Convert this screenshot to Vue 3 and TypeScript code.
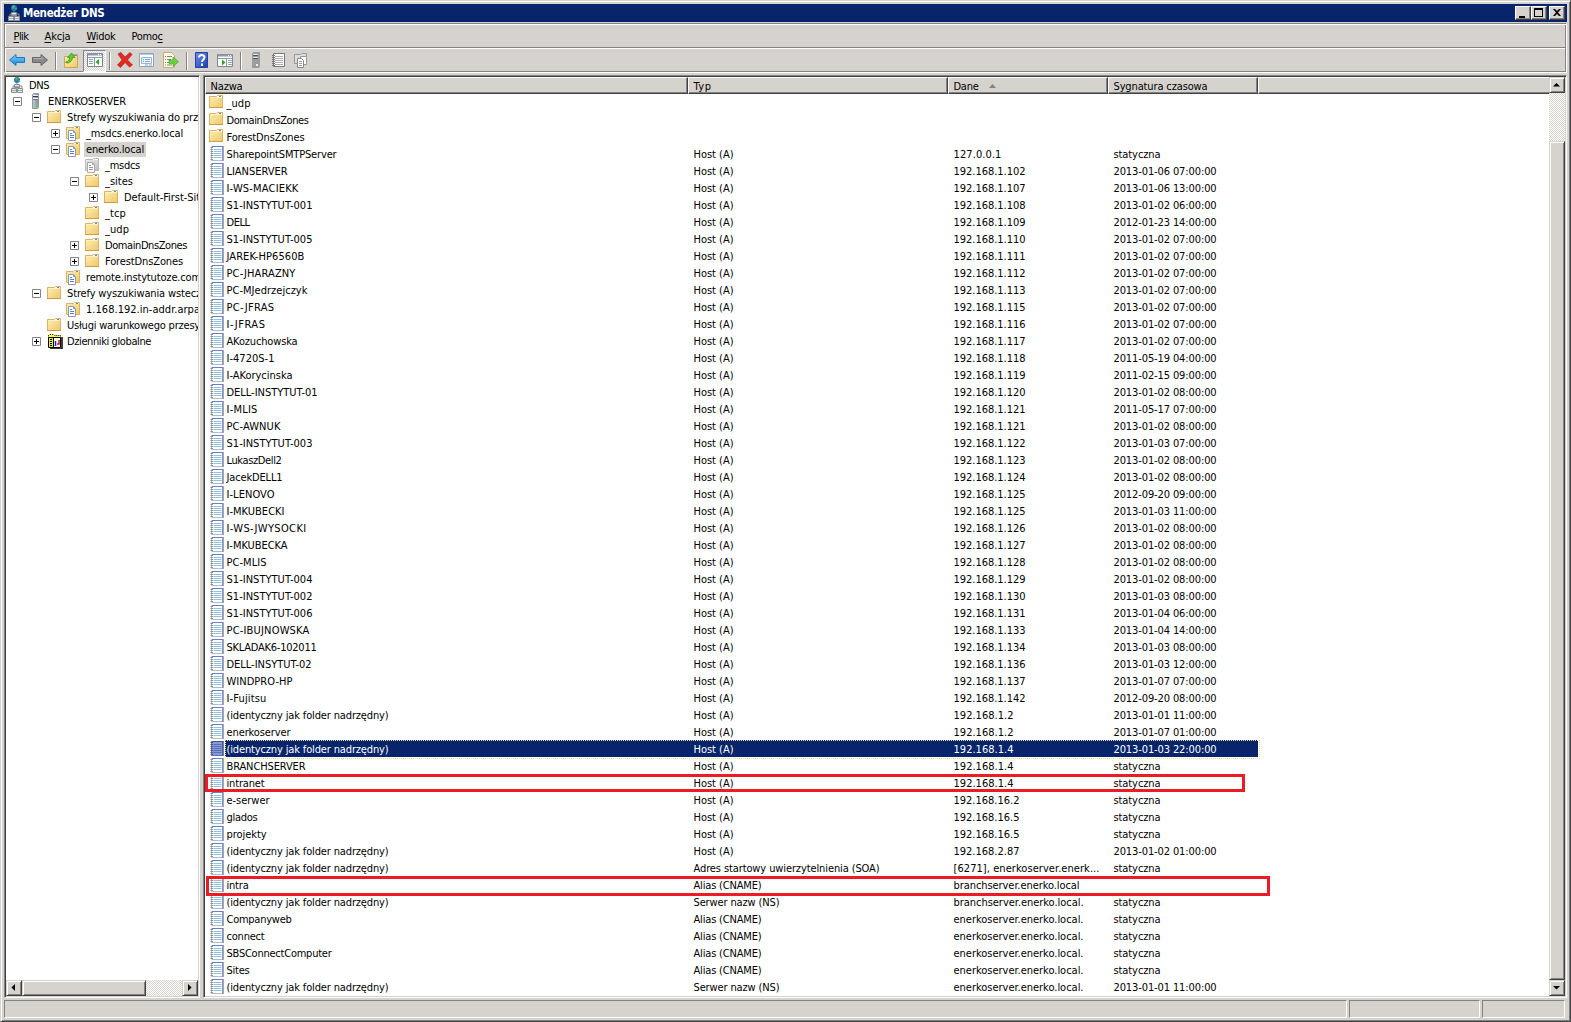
<script setup lang="ts">
type Kind = 'dns' | 'server' | 'folder' | 'zone' | 'grey' | 'log' | 'record'
interface Node { t: string; l: number; k: Kind; e?: '+' | '-'; sel?: boolean }
const tree: Node[] = [
  { t: 'DNS', l: 0, k: 'dns' },
  { t: 'ENERKOSERVER', l: 1, k: 'server', e: '-' },
  { t: 'Strefy wyszukiwania do prz', l: 2, k: 'folder', e: '-' },
  { t: '_msdcs.enerko.local', l: 3, k: 'zone', e: '+' },
  { t: 'enerko.local', l: 3, k: 'zone', e: '-', sel: true },
  { t: '_msdcs', l: 4, k: 'grey' },
  { t: '_sites', l: 4, k: 'folder', e: '-' },
  { t: 'Default-First-Sit', l: 5, k: 'folder', e: '+' },
  { t: '_tcp', l: 4, k: 'folder' },
  { t: '_udp', l: 4, k: 'folder' },
  { t: 'DomainDnsZones', l: 4, k: 'folder', e: '+' },
  { t: 'ForestDnsZones', l: 4, k: 'folder', e: '+' },
  { t: 'remote.instytutoze.com', l: 3, k: 'zone' },
  { t: 'Strefy wyszukiwania wstecz', l: 2, k: 'folder', e: '-' },
  { t: '1.168.192.in-addr.arpa', l: 3, k: 'zone' },
  { t: 'Usługi warunkowego przesy', l: 2, k: 'folder' },
  { t: 'Dzienniki globalne', l: 2, k: 'log', e: '+' },
]
const same = '(identyczny jak folder nadrzędny)'
const A = 'Host (A)'
const st = 'statyczna'
const C = 'Alias (CNAME)'
const hosts: [string, string, string][] = [
  ['LIANSERVER', '102', '2013-01-06 07'], ['I-WS-MACIEKK', '107', '2013-01-06 13'],
  ['S1-INSTYTUT-001', '108', '2013-01-02 06'], ['DELL', '109', '2012-01-23 14'],
  ['S1-INSTYTUT-005', '110', '2013-01-02 07'], ['JAREK-HP6560B', '111', '2013-01-02 07'],
  ['PC-JHARAZNY', '112', '2013-01-02 07'], ['PC-MJedrzejczyk', '113', '2013-01-02 07'],
  ['PC-JFRAS', '115', '2013-01-02 07'], ['I-JFRAS', '116', '2013-01-02 07'],
  ['AKozuchowska', '117', '2013-01-02 07'], ['I-4720S-1', '118', '2011-05-19 04'],
  ['I-AKorycinska', '119', '2011-02-15 09'], ['DELL-INSTYTUT-01', '120', '2013-01-02 08'],
  ['I-MLIS', '121', '2011-05-17 07'], ['PC-AWNUK', '121', '2013-01-02 08'],
  ['S1-INSTYTUT-003', '122', '2013-01-03 07'], ['LukaszDell2', '123', '2013-01-02 08'],
  ['JacekDELL1', '124', '2013-01-02 08'], ['I-LENOVO', '125', '2012-09-20 09'],
  ['I-MKUBECKI', '125', '2013-01-03 11'], ['I-WS-JWYSOCKI', '126', '2013-01-02 08'],
  ['I-MKUBECKA', '127', '2013-01-02 08'], ['PC-MLIS', '128', '2013-01-02 08'],
  ['S1-INSTYTUT-004', '129', '2013-01-02 08'], ['S1-INSTYTUT-002', '130', '2013-01-03 08'],
  ['S1-INSTYTUT-006', '131', '2013-01-04 06'], ['PC-IBUJNOWSKA', '133', '2013-01-04 14'],
  ['SKLADAK6-102011', '134', '2013-01-03 08'], ['DELL-INSYTUT-02', '136', '2013-01-03 12'],
  ['WINDPRO-HP', '137', '2013-01-07 07'], ['I-Fujitsu', '142', '2012-09-20 08'],
  [same, '2', '2013-01-01 11'], ['enerkoserver', '2', '2013-01-07 01'], [same, '4', '2013-01-03 22'],
]
const rows: string[][] = [
  ['_udp', '', '', ''], ['DomainDnsZones', '', '', ''], ['ForestDnsZones', '', '', ''],
  ['SharepointSMTPServer', A, '127.0.0.1', st],
  ...hosts.map(([n, ip, d]) => [n, A, '192.168.1.' + ip, d + ':00:00']),
  ['BRANCHSERVER', A, '192.168.1.4', st], ['intranet', A, '192.168.1.4', st],
  ['e-serwer', A, '192.168.16.2', st], ['glados', A, '192.168.16.5', st], ['projekty', A, '192.168.16.5', st],
  [same, A, '192.168.2.87', '2013-01-02 01:00:00'],
  [same, 'Adres startowy uwierzytelnienia (SOA)', '[6271], enerkoserver.enerk...', st],
  ['intra', C, 'branchserver.enerko.local', ''],
  [same, 'Serwer nazw (NS)', 'branchserver.enerko.local.', st],
  ['Companyweb', C, 'enerkoserver.enerko.local.', st], ['connect', C, 'enerkoserver.enerko.local.', st],
  ['SBSConnectComputer', C, 'enerkoserver.enerko.local.', st], ['Sites', C, 'enerkoserver.enerko.local.', st],
  [same, 'Serwer nazw (NS)', 'enerkoserver.enerko.local.', '2013-01-01 11:00:00'],
]
const selected = 38
const menu = [['', 'P', 'lik'], ['', 'A', 'kcja'], ['', 'W', 'idok'], ['Pomo', 'c', '']]
const tools = ['back', 'fwd', '|', 'up', 'pane', '|', 'del', 'props', 'export', '|', 'help', 'action', '|', 'srv', 'book', 'copy']

// Character advances of the classic 11px dialog font; tracking is derived so each string keeps its width.
const groups: Record<number, string> = {
  2: 'ilł', 3: 'j ', 4: 'frtI.,:-()[]', 5: 'ckszJL', 7: 'ACDGHNRU', 8: 'mwMOQ', 10: 'W',
}
const advance = (c: string): number => {
  for (const w in groups) if (groups[w].includes(c)) return Number(w)
  return 6
}
const ctx = document.createElement('canvas').getContext('2d')!
ctx.font = '11px "DejaVu Sans Condensed", "DejaVu Sans", sans-serif'
const fit = (t: string) => {
  if (!t) return {}
  const target = [...t].reduce((s, c) => s + advance(c), 0)
  return { letterSpacing: ((target - ctx.measureText(t).width) / t.length).toFixed(3) + 'px' }
}
</script>

<template>
  <svg width="0" height="0" class="defs">
    <defs>
      <linearGradient id="gf" x1="0" y1="0" x2="1" y2="1"><stop offset="0" stop-color="#fff0b8" /><stop offset="1" stop-color="#f0c766" /></linearGradient>
      <linearGradient id="gg" x1="0" y1="0" x2="1" y2="1"><stop offset="0" stop-color="#f0f0f0" /><stop offset="1" stop-color="#bdbdbd" /></linearGradient>
      <linearGradient id="gb" x1="0" y1="0" x2="0" y2="1"><stop offset="0" stop-color="#7fd4fb" /><stop offset="1" stop-color="#1184d8" /></linearGradient>
      <linearGradient id="gs" x1="0" y1="0" x2="1" y2="0"><stop offset="0" stop-color="#c3ccd4" /><stop offset="1" stop-color="#7f8c97" /></linearGradient>
      <linearGradient id="gh" x1="0" y1="0" x2="1" y2="1"><stop offset="0" stop-color="#6d8df0" /><stop offset="1" stop-color="#1c3fae" /></linearGradient>
    </defs>
    <symbol id="i-folder" viewBox="0 0 16 16">
      <path d="M.5 2.500h7l1-1h5v12H.5z" fill="url(#gf)" stroke="#dcb264" />
      <path d="M8 2.500h5" stroke="#fff" /><path d="M10 2.500h2" stroke="#3d92dc" /><path d="M1 3.500h12" stroke="#fff2c0" />
      <path d="M0 13.500h14" stroke="#c99c48" />
    </symbol>
    <symbol id="i-zone" viewBox="0 0 16 16">
      <path d="M.5 2.500h7l1-1h5v12H.5z" fill="url(#gf)" stroke="#dcb264" />
      <path d="M8 2.500h5" stroke="#fff" /><path d="M10 2.500h2" stroke="#3d92dc" />
      <path d="M2.500 5.500h5l2 2v8h-7z" fill="#fff" stroke="#8c9cb4" /><path d="M7.500 5.500v2h2" fill="none" stroke="#8c9cb4" />
      <path d="M4 8.500h2M4 10.500h4M4 12.500h4" stroke="#4a86c8" />
    </symbol>
    <symbol id="i-grey" viewBox="0 0 16 16">
      <path d="M.5 2.500h7l1-1h5v12H.5z" fill="url(#gg)" stroke="#b8b8b8" />
      <path d="M8 2.500h5" stroke="#fff" />
      <path d="M2.500 5.500h5l2 2v8h-7z" fill="#fff" stroke="#a8a8a8" /><path d="M7.500 5.500v2h2" fill="none" stroke="#a8a8a8" />
      <path d="M4 8.500h2M4 10.500h4M4 12.500h4" stroke="#999" />
    </symbol>
    <symbol id="i-record" viewBox="0 0 16 16">
      <path d="M2.500 1.500h11v14h-11z" fill="#fff" stroke="#b4bac2" />
      <path d="M3 1.500h11" stroke="#6480c0" /><path d="M14 1v15" stroke="#7888bc" stroke-width="1.500" />
      <path d="M4.500 4.500h8M4.500 6.500h8M4.500 8.500h8M4.500 10.500h8M4.500 12.500h8" stroke="#90c0dc" />
      <path d="M1.500 2.500h2.500M1.500 4.500h2.500M1.500 6.500h2.500M1.500 8.500h2.500M1.500 10.500h2.500M1.500 12.500h2.500M1.500 14.500h2.500" stroke="#909090" />
    </symbol>
    <symbol id="i-server" viewBox="0 0 16 16">
      <path d="M4.500 2l1-1.500h5v13.500l-1 1.500h-5z" fill="url(#gs)" stroke="#8f9aa3" />
      <path d="M5 3.500h5" stroke="#2f3b47" /><path d="M5 2.500h5M5 5.500h5" stroke="#eef" /><path d="M5 6.500h5" stroke="#707c88" /><path d="M8 12.500h2.500v2H8z" fill="#5fe01c" />
    </symbol>
    <symbol id="i-dns" viewBox="0 0 16 16">
      <circle cx="8" cy="3" r="3" fill="#2577c0" /><path d="M6 1l2-1 1 2-2 2zM9 3l2 0-1 2z" fill="#46c24c" />
      <path d="M8 6v2M4 11v-2h9v2" stroke="#888" fill="none" />
      <path d="M5.500 7.500h5v3h-5zM2.500 11.500h5v4h-5zM8.500 11.500h5v4h-5z" fill="#e8eaec" stroke="#858c92" />
      <path d="M6 9.500h4M3 13.500h4M9 13.500h4" stroke="#a0a8ae" />
    </symbol>
    <symbol id="i-log" viewBox="0 0 16 16">
      <path d="M1.500 2.500l1-1h4l1 1h6v2h-12z" fill="#ffff30" stroke="#000" stroke-dasharray="1 1" />
      <path d="M1.500 4.500h12v10h-12z" fill="#fff" stroke="#000" /><path d="M2 5h4v9H2z" fill="#e4e430" />
      <path d="M4 6v8" stroke="#000" stroke-width="2" stroke-dasharray="1 1" /><path d="M15 4v12H3" stroke="#000" stroke-width="1.500" fill="none" />
      <path d="M6.500 5v9" stroke="#000" /><path d="M8.500 8v5" stroke="#22b" stroke-width="1.500" /><path d="M10 11h2V7" stroke="#d11" stroke-width="1.500" fill="none" />
    </symbol>
    <symbol id="t-back" viewBox="0 0 16 16"><path d="M.5 8L7 2.500V5.500h8.500v5H7v3z" fill="url(#gb)" stroke="#1e78c0" /></symbol>
    <symbol id="t-fwd" viewBox="0 0 16 16"><path d="M15.500 8L9 2.500V5.500H.5v5H9v3z" fill="#8c8c8c" stroke="#666" /><path d="M1.500 6.500H10V5" stroke="#b5b5b5" fill="none" /></symbol>
    <symbol id="t-up" viewBox="0 0 16 16">
      <path d="M1.500 4.500h7l1-2h5v13h-13z" fill="url(#gf)" stroke="#d0a552" /><path d="M10 3.500h4" stroke="#4c9be0" />
      <path d="M2.500 10c3-.5 4-2 4-4.500H4.500L8.500 1l3.500 4.500H9.500c0 3-2.500 5.500-6 5.500z" fill="#5ad02c" stroke="#30901a" stroke-width=".7" />
    </symbol>
    <symbol id="t-pane" viewBox="0 0 16 16">
      <path d="M.5 1.500h15v13H.5z" fill="#fff" stroke="#7c8794" /><path d="M1 2.500h14" stroke="#8d99a8" stroke-width="2" /><path d="M1 5.500h14M7.500 6v8" stroke="#8c98a4" />
      <path d="M2 7.500h4M2 9.500h4M2 11.500h4" stroke="#8aa" /><path d="M12 7v6L8.500 10z" fill="#29a329" /><path d="M11 2.500h1M13 2.500h1" stroke="#fff" />
    </symbol>
    <symbol id="t-action" viewBox="0 0 16 16">
      <path d="M.5 2.500h15v12H.5z" fill="#fff" stroke="#7c8794" /><path d="M1 3.500h14" stroke="#8d99a8" stroke-width="2" /><path d="M1 6.500h14M9.500 7v7" stroke="#8c98a4" />
      <path d="M11 8.500h4M11 10.500h4M11 12.500h4" stroke="#8aa" /><path d="M5 7.500v6L8.500 10.500z" fill="#29a329" /><path d="M11 3.500h1M13 3.500h1" stroke="#fff" />
    </symbol>
    <symbol id="t-del" viewBox="0 0 16 16"><path d="M1 2l3-1.500 4 4.500 5-4.500 2 2-4.500 5.500 5 5-3 2-4.500-4.500L3.500 15.500.5 13l4.500-5z" fill="#e02a22" stroke="#a61512" stroke-width=".6" /></symbol>
    <symbol id="t-props" viewBox="0 0 16 16">
      <path d="M.5 1.500h14v13H.5z" fill="#fff" stroke="#8ea3c2" /><path d="M1 2.500h13" stroke="#b8cbe2" /><path d="M2.500 5.500h10v6h-10z" fill="#eef6ff" stroke="#9bb4cc" />
      <path d="M4 7.500h1M4 9.500h1" stroke="#3bc" /><path d="M6 7.500h5M6 9.500h5M6 13h3M10 13h3" stroke="#7aa6d8" />
    </symbol>
    <symbol id="t-export" viewBox="0 0 16 16">
      <path d="M.5.500h8l3 3v12H.5z" fill="#fffbe0" stroke="#c9b070" /><path d="M2 4.500h1M2 7.500h1M2 10.500h1M2 13h1M4 4.500h5M4 7.500h4M4 10.500h3M4 13h5" stroke="#77809a" />
      <path d="M6 8h4V5l5.500 4.700-5.500 4.800v-3H6z" fill="#6ad23c" stroke="#399a1c" stroke-width=".6" />
    </symbol>
    <symbol id="t-help" viewBox="0 0 16 16"><path d="M1.500.500h12v15h-12z" fill="url(#gh)" stroke="#2440a0" /><path d="M5 5.500C5 2 10.500 2 10.500 5.500c0 2-2.500 2-2.500 4.500M8 11.500V14" fill="none" stroke="#fff" stroke-width="2" /></symbol>
    <symbol id="t-srv" viewBox="0 0 16 16"><path d="M4 2l1-2h7v14l-1 2H4z" fill="#9c9c9c" /><path d="M5 2.500h5M5 5.500h5" stroke="#e4e4e4" /><path d="M5 3.500h5M5 6.500h5" stroke="#555" /><path d="M8 12h2v2H8z" fill="#eee" /></symbol>
    <symbol id="t-book" viewBox="0 0 16 16"><path d="M2.500 1.500h11v13h-11z" fill="#fff" stroke="#777" /><path d="M4 4.500h8M4 6.500h8M4 8.500h8M4 10.500h8M4 12.500h8" stroke="#aaa" /><path d="M1 3.500h3M1 5.500h3M1 7.500h3M1 9.500h3M1 11.500h3M1 13.500h3" stroke="#777" /></symbol>
    <symbol id="t-copy" viewBox="0 0 16 16"><path d="M1.500 2.500h6l1-1h5v10h-12z" fill="#ddd" stroke="#999" /><path d="M7.500 4.500h6v8h-6z" fill="#fff" stroke="#999" /><path d="M4.500 6.500h4l2 2v7h-6z" fill="#fff" stroke="#888" /><path d="M6 9.500h3M6 11.500h3M6 13.500h3" stroke="#999" /></symbol>
  </svg>

  <div class="win">
    <header class="title">
      <svg class="ic"><use href="#i-dns" /></svg><b>Menedżer DNS</b>
      <div class="btns">
        <i><svg viewBox="0 0 14 12"><path d="M3 9h6v2H3z" /></svg></i>
        <i><svg viewBox="0 0 14 12"><path d="M2 1h9v9H2zM3 3v6h7V3z" fill-rule="evenodd" /></svg></i>
        <i class="x"><svg viewBox="0 0 14 12"><path d="M3 2h2l2 2 2-2h2L8 5.500 11 9H9L7 7 5 9H3l3-3.500z" /></svg></i>
      </div>
    </header>
    <div class="bars">
      <nav class="menu"><span v-for="(m, i) in menu" :key="i" :style="fit(m.join(''))">{{ m[0] }}<u>{{ m[1] }}</u>{{ m[2] }}</span></nav>
      <div class="tools">
        <template v-for="(t, i) in tools" :key="i">
          <i v-if="t === '|'" class="sep" />
          <span v-else :class="['tb', t]"><svg class="ic"><use :href="'#t-' + t" /></svg></span>
        </template>
      </div>
    </div>
    <main class="body">
      <aside class="panel left">
        <div class="tree">
          <div v-for="(n, i) in tree" :key="i" :class="['node', 'l' + n.l]">
            <span v-if="n.l" class="ex"><svg v-if="n.e" width="9" height="9"><path d="M.5.5h8v8h-8z" fill="#fff" stroke="#848284" /><path :d="n.e === '+' ? 'M2 4.500h5M4.500 2v5' : 'M2 4.500h5'" stroke="#000" /></svg></span>
            <svg class="ic"><use :href="'#i-' + n.k" /></svg>
            <span :class="['lbl', { on: n.sel }]" :style="fit(n.t)">{{ n.t }}</span>
          </div>
        </div>
        <div class="hs"><i class="sb"><svg viewBox="0 0 7 7"><path d="M5 0v7L1.500 3.500z" /></svg></i><i class="sb thumb" /><span /><i class="sb"><svg viewBox="0 0 7 7"><path d="M2 0v7l3.500-3.500z" /></svg></i></div>
      </aside>
      <section class="panel right">
        <div class="list">
          <div class="cols head"><span :style="fit('Nazwa')">Nazwa</span><span :style="fit('Typ')">Typ</span><span :style="fit('Dane')">Dane<svg width="7" height="4"><path d="M3.500 0L7 4H0z" fill="#848284" /></svg></span><span :style="fit('Sygnatura czasowa')">Sygnatura czasowa</span><span /></div>
          <div v-for="(r, i) in rows" :key="i" :class="['cols', 'row', { sel: i === selected }]">
            <span :style="fit(r[0])"><svg class="ic"><use :href="i < 3 ? '#i-folder' : '#i-record'" /></svg>{{ r[0] }}</span><span v-for="c in [1, 2, 3]" :key="c" :style="fit(r[c])">{{ r[c] }}</span>
          </div>
          <div class="mark m1" /><div class="mark m2" />
        </div>
        <div class="vs"><i class="sb"><svg viewBox="0 0 7 7"><path d="M0 5.500h7L3.500 2z" /></svg></i><span /><i class="sb thumb" /><i class="sb"><svg viewBox="0 0 7 7"><path d="M0 2h7L3.500 5.500z" /></svg></i></div>
      </section>
    </main>
    <footer class="status"><i /><i /><i /></footer>
  </div>
</template>

<style>
body { overflow: hidden; background: #d6d3ce; }
</style>
<style scoped>
* { box-sizing: border-box; }
.defs { position: absolute; }
.win { width: 1571px; height: 1022px; background: #d6d3ce; border: 1px solid; border-color: #d6d3ce #424142 #424142 #d6d3ce; box-shadow: inset 1px 1px #fff, inset -1px -1px #848284; padding: 3px 2px 2px 3px; font: 11px/16px "DejaVu Sans Condensed", "DejaVu Sans", sans-serif; color: #000; display: flex; flex-direction: column; white-space: pre; }
.ic { width: 16px; height: 16px; flex: none; display: block; }
.title { height: 18px; width: 1563px; background: #08246b; color: #fff; display: flex; align-items: center; padding: 0 2px; flex: none; }
.title b { font-size: 11.500px; letter-spacing: -.35px; margin-left: 1px; }
.btns { margin-left: auto; display: flex; }
.btns i { width: 16px; height: 14px; background: #d6d3ce; border: 1px solid; border-color: #fff #424142 #424142 #fff; box-shadow: inset -1px -1px #848284; }
.btns svg { width: 14px; height: 12px; display: block; }
.btns .x { margin-left: 2px; }
.bars { flex: none; width: 1563px; margin-top: 1px; height: 50px; border: 1px solid; border-color: #848284 #fff #fff #848284; box-shadow: inset 1px 1px #fff, inset -1px -1px #848284; }
.menu { height: 24px; border-bottom: 1px solid #848284; display: flex; padding: 5px 0 0 8.500px; }
.menu span { margin-right: 16px; }
.menu u { text-underline-offset: 2px; text-decoration-thickness: 1px; }
.tools { height: 24px; border-top: 1px solid #fff; display: flex; padding: 1px 0 0 0; margin: 0 1px; }
.tb { width: 23px; height: 22px; padding: 2px 0 0 3px; }
.pane { background: repeating-conic-gradient(#fff 0 25%, #d6d3ce 0 50%) 0 0/2px 2px; border: 1px solid; border-color: #848284 #fff #fff #848284; padding: 1px 0 0 3px; }
.props { padding-left: 2px; }
.srv, .book { padding-left: 3px; }
.copy { padding-left: 2px; }
.sep { width: 2px; height: 18px; margin: 2px 3px 0 3px; border-left: 1px solid #848284; border-right: 1px solid #fff; }
.body { display: flex; margin-top: 2px; height: 923px; flex: none; }
.panel { border: 1px solid; border-color: #848284 #fff #fff #848284; box-shadow: inset 1px 1px #424142, inset -1px -1px #d6d3ce; padding: 1px; background: #fff; display: flex; }
.left { width: 196px; margin-right: 3px; flex-direction: column; }
.right { width: 1364px; }
.tree { flex: 1; overflow: hidden; }
.node { height: 16px; display: flex; align-items: center; }
.l0 { padding-left: 3px; } .l1 { padding-left: 7px; } .l2 { padding-left: 26px; } .l3 { padding-left: 45px; } .l4 { padding-left: 64px; } .l5 { padding-left: 83px; }
.ex { width: 15px; flex: none; display: flex; }
.lbl { margin-left: 2px; padding: 0 2px; height: 15px; line-height: 15px; }
.lbl.on { background: #d6d3ce; }
.hs { height: 16px; display: flex; flex: none; }
.hs span, .vs span { flex: 1; background: repeating-conic-gradient(#fff 0 25%, #d6d3ce 0 50%) 0 0/2px 2px; }
.sb { width: 16px; height: 16px; flex: none; background: #d6d3ce; border: 1px solid; border-color: #d6d3ce #424142 #424142 #d6d3ce; box-shadow: inset 1px 1px #fff, inset -1px -1px #848284; display: flex; align-items: center; justify-content: center; }
.sb svg { width: 7px; height: 7px; margin: -1px 1px 0 0; }
.hs .thumb { width: 124px; }
.vs { width: 16px; display: flex; flex-direction: column; flex: none; }
.vs span { flex: none; height: 48px; }
.vs .thumb { height: auto; flex: 1; }
.list { flex: 1; position: relative; overflow: hidden; }
.cols { display: grid; grid-template-columns: 483px 260px 160px 150px 1fr; }
.head { height: 17px; background: #d6d3ce; }
.head span { border: 1px solid; border-color: #fff #424142 #424142 #fff; box-shadow: inset -1px -1px #848284; padding-left: 4.500px; line-height: 17px; height: 17px; }
.head span:last-child { border-right: 0; box-shadow: inset 0 -1px #848284; }
.head svg { margin: 0 0 2px 10px; }
.row { height: 17px; line-height: 20px; }
.row span { padding-left: 5.500px; height: 17px; }
.row span:first-child { display: flex; padding-left: 4px; }
.row .ic { margin-right: 1.500px; }
.row.sel { color: #fff; background: linear-gradient(#08246b, #08246b) 20px 0/1033px 17px no-repeat; position: relative; }
.row.sel::after { content: ''; position: absolute; left: 20px; top: 0; width: 1033px; height: 17px; border: 1px dotted #f7db94; }
.row.sel .ic { filter: brightness(.5) sepia(1) hue-rotate(190deg) saturate(2); }
.mark { position: absolute; border: 3px solid #ed1c24; }
.m1 { left: 0; top: 697px; width: 1040px; height: 18px; }
.m2 { left: 1px; top: 799px; width: 1064px; height: 20px; }
.status { display: flex; gap: 2px; margin-top: 2px; height: 18px; flex: none; }
.status i { border: 1px solid; border-color: #848284 #fff #fff #848284; width: 1343px; }
.status i:nth-child(2) { width: 131px; }
.status i:nth-child(3) { width: 83px; }
</style>
